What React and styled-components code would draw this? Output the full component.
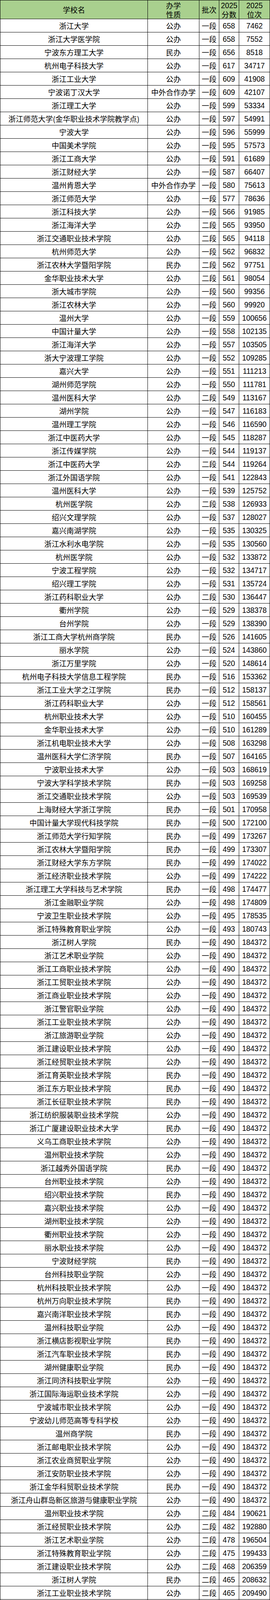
import React from "react";
import styled, { createGlobalStyle } from "styled-components";

const GlobalStyle = createGlobalStyle`
  html {
    -webkit-text-size-adjust: 100%;
    text-size-adjust: 100%;
  }
  html, body { margin: 0; padding: 0; background: #ffffff; }
  body {
    font-family: "Noto Sans CJK SC", "Liberation Sans", sans-serif;
    color: #000;
  }
`;

const RAW = `浙江大学|公办|一段|658|7462
浙江大学医学院|公办|一段|658|7552
宁波东方理工大学|民办|一段|656|8518
杭州电子科技大学|公办|一段|617|34717
浙江工业大学|公办|一段|609|41908
宁波诺丁汉大学|中外合作办学|一段|609|42107
浙江理工大学|公办|一段|599|53334
浙江师范大学(金华职业技术学院教学点)|公办|一段|597|54991
宁波大学|公办|一段|596|55999
中国美术学院|公办|一段|595|57573
浙江工商大学|公办|一段|591|61689
浙江财经大学|公办|一段|587|66407
温州肯恩大学|中外合作办学|一段|580|75613
浙江师范大学|公办|一段|577|78636
浙江科技大学|公办|一段|566|91985
浙江海洋大学|公办|二段|565|93950
浙江交通职业技术学院|公办|二段|565|94118
杭州师范大学|公办|一段|562|96832
浙江农林大学暨阳学院|民办|二段|562|97751
金华职业技术大学|公办|二段|561|98054
浙大城市学院|公办|一段|560|99356
浙江农林大学|公办|一段|560|99920
温州大学|公办|一段|559|100656
中国计量大学|公办|一段|558|102135
浙江海洋大学|公办|一段|557|103505
浙大宁波理工学院|公办|一段|552|109285
嘉兴大学|公办|一段|551|111213
湖州师范学院|公办|一段|550|111781
温州医科大学|公办|二段|549|113167
湖州学院|公办|一段|547|116183
温州理工学院|公办|一段|546|116590
浙江中医药大学|公办|一段|545|118287
浙江传媒学院|公办|一段|544|119137
浙江中医药大学|公办|二段|544|119264
浙江外国语学院|公办|一段|541|122843
温州医科大学|公办|一段|539|125752
杭州医学院|公办|二段|538|126933
绍兴文理学院|公办|一段|537|128027
嘉兴南湖学院|公办|一段|535|130325
浙江水利水电学院|公办|一段|535|130560
杭州医学院|公办|一段|532|133872
宁波工程学院|公办|一段|532|134717
绍兴理工学院|公办|一段|531|135724
浙江药科职业大学|公办|二段|530|136447
衢州学院|公办|一段|529|138378
台州学院|公办|一段|529|138390
浙江工商大学杭州商学院|民办|一段|526|141605
丽水学院|公办|一段|524|143860
浙江万里学院|公办|一段|520|148614
杭州电子科技大学信息工程学院|民办|一段|516|153362
浙江工业大学之江学院|民办|一段|512|158137
浙江药科职业大学|公办|一段|512|158561
杭州职业技术大学|公办|一段|510|160455
金华职业技术大学|公办|一段|510|161289
浙江机电职业技术大学|公办|一段|508|163298
温州医科大学仁济学院|民办|一段|507|164165
宁波职业技术大学|公办|一段|503|168619
宁波大学科学技术学院|民办|一段|503|169258
浙江交通职业技术学院|公办|一段|503|169539
上海财经大学浙江学院|民办|一段|501|170958
中国计量大学现代科技学院|民办|一段|500|172100
浙江师范大学行知学院|民办|一段|499|173267
浙江农林大学暨阳学院|民办|一段|499|173307
浙江财经大学东方学院|民办|一段|499|174022
浙江经济职业技术学院|公办|一段|499|174222
浙江理工大学科技与艺术学院|民办|一段|498|174477
浙江金融职业学院|公办|一段|498|174809
宁波卫生职业技术学院|公办|一段|495|178535
浙江特殊教育职业学院|公办|一段|493|180743
浙江树人学院|民办|一段|490|184372
浙江艺术职业学院|公办|一段|490|184372
浙江工商职业技术学院|公办|一段|490|184372
浙江工贸职业技术学院|公办|一段|490|184372
浙江商业职业技术学院|公办|一段|490|184372
浙江警官职业学院|公办|一段|490|184372
浙江工业职业技术学院|公办|一段|490|184372
浙江旅游职业学院|公办|一段|490|184372
浙江建设职业技术学院|公办|一段|490|184372
浙江经贸职业技术学院|公办|一段|490|184372
浙江育英职业技术学院|民办|一段|490|184372
浙江东方职业技术学院|民办|一段|490|184372
浙江长征职业技术学院|民办|一段|490|184372
浙江纺织服装职业技术学院|公办|一段|490|184372
浙江广厦建设职业技术大学|民办|一段|490|184372
义乌工商职业技术学院|公办|一段|490|184372
温州职业技术学院|公办|一段|490|184372
浙江越秀外国语学院|民办|一段|490|184372
台州职业技术学院|公办|一段|490|184372
绍兴职业技术学院|民办|一段|490|184372
嘉兴职业技术学院|公办|一段|490|184372
湖州职业技术学院|公办|一段|490|184372
衢州职业技术学院|公办|一段|490|184372
丽水职业技术学院|公办|一段|490|184372
宁波财经学院|民办|一段|490|184372
台州科技职业学院|公办|一段|490|184372
杭州科技职业技术学院|公办|一段|490|184372
杭州万向职业技术学院|民办|一段|490|184372
嘉兴南洋职业技术学院|民办|一段|490|184372
温州科技职业学院|公办|一段|490|184372
浙江横店影视职业学院|民办|一段|490|184372
浙江汽车职业技术学院|民办|一段|490|184372
湖州健康职业学院|民办|一段|490|184372
浙江同济科技职业学院|公办|一段|490|184372
浙江国际海运职业技术学院|公办|一段|490|184372
宁波城市职业技术学院|公办|一段|490|184372
宁波幼儿师范高等专科学校|公办|一段|490|184372
温州商学院|民办|一段|490|184372
浙江邮电职业技术学院|公办|一段|490|184372
浙江农业商贸职业学院|公办|一段|490|184372
浙江安防职业技术学院|公办|一段|490|184372
浙江金华科贸职业技术学院|民办|一段|490|184372
浙江舟山群岛新区旅游与健康职业学院|公办|一段|490|184372
温州职业技术学院|公办|二段|484|190621
浙江经贸职业技术学院|公办|二段|482|192880
浙江艺术职业学院|公办|二段|478|196504
浙江特殊教育职业学院|公办|二段|475|199433
浙江建设职业技术学院|公办|二段|468|206359
浙江树人学院|民办|二段|465|208632
浙江工业职业技术学院|公办|二段|465|209490
杭州科技职业技术学院|公办|二段|463|210588
浙江工商职业技术学院|公办|二段|461|213024
浙江旅游职业学院|公办|二段|461|213035
浙江商业职业技术学院|公办|二段|460|213114
浙江工贸职业技术学院|公办|二段|459|213920
浙江警官职业学院|公办|二段|457|216371
浙江邮电职业技术学院|公办|二段|455|217743
湖州职业技术学院|公办|二段|454|218970
宁波财经学院|民办|二段|452|220014
义乌工商职业技术学院|公办|二段|452|220463
宁波城市职业技术学院|公办|二段|451|221091
台州职业技术学院|公办|二段|451|221171
浙江同济科技职业学院|公办|二段|451|221492
衢州职业技术学院|公办|二段|449|222871
丽水职业技术学院|公办|二段|446|225219
浙江农业商贸职业学院|公办|二段|444|226786
浙江安防职业技术学院|公办|二段|443|227322
嘉兴职业技术学院|公办|二段|443|227569
温州科技职业学院|公办|二段|442|228129
浙江国际海运职业技术学院|公办|二段|438|230831
绍兴职业技术学院|民办|二段|434|234125
台州科技职业学院|公办|二段|431|235754
浙江纺织服装职业技术学院|公办|二段|431|235994
杭州万向职业技术学院|民办|二段|427|238399
浙江舟山群岛新区旅游与健康职业学院|公办|二段|413|247441
浙江育英职业技术学院|民办|二段|411|248495
浙江长征职业技术学院|民办|二段|410|248771
湖州健康职业学院|民办|二段|409|249292
浙江广厦建设职业技术大学|民办|二段|407|250783
浙江东方职业技术学院|民办|二段|402|253200
嘉兴南洋职业技术学院|民办|二段|402|253466
浙江汽车职业技术学院|民办|二段|398|255217
浙江横店影视职业学院|民办|二段|387|260712
浙江越秀外国语学院|民办|二段|385|261592
浙江金华科贸职业技术学院|民办|二段|383|262430
宁波幼儿师范高等专科学校|公办|二段|382|262701
温州商学院|民办|二段|379|264112
浙江宇翔职业技术学院|民办|二段|372|266938`;

const ROWS = RAW.split("\n").map((line) => {
  const [name, kind, batch, score, rank] = line.split("|");
  return { name, kind, batch, score, rank };
});

const Table = styled.div`
  width: 692px;
  box-sizing: border-box;
  border-left: 1px solid #000;
  border-top: 1px solid #000;
  background: #fff;
`;

const Row = styled.div`
  display: grid;
  grid-template-columns: 378px 132px 51px 51px 79px;
  grid-template-rows: ${(p) => (p.$head ? 48 : 34)}px;
  height: ${(p) => (p.$head ? 48 : 34)}px;
  background: ${(p) => (p.$head ? "#a9d08e" : "#ffffff")};
`;

const Cell = styled.div`
  box-sizing: border-box;
  height: ${(p) => (p.$head ? 48 : 34)}px;
  min-height: 0;
  border-right: 1px solid #000;
  border-bottom: 1px solid #000;
  display: flex;
  align-items: center;
  justify-content: center;
  text-align: center;
  overflow: hidden;
  white-space: nowrap;
  font-family: "Noto Sans CJK SC", "Liberation Sans", sans-serif;
  font-size: 19px;
  line-height: ${(p) => (p.$head ? "23px" : "33px")};
  color: #000;
`;

const HeadText = styled.span`
  display: block;
  white-space: pre-line;
`;

const Num = styled.span`
  display: inline-block;
  font-family: "Liberation Sans", Arial, sans-serif;
  font-size: 21px;
  transform: scaleX(0.9);
`;

export default function App() {
  return (
    <>
      <GlobalStyle />
      <Table>
        <Row $head>
          <Cell $head>
            <HeadText>学校名</HeadText>
          </Cell>
          <Cell $head>
            <HeadText>{"办学\n性质"}</HeadText>
          </Cell>
          <Cell $head>
            <HeadText>批次</HeadText>
          </Cell>
          <Cell $head>
            <HeadText>
              <Num>2025</Num>
              {"\n分数"}
            </HeadText>
          </Cell>
          <Cell $head>
            <HeadText>
              <Num>2025</Num>
              {"\n位次"}
            </HeadText>
          </Cell>
        </Row>
        {ROWS.map((r, i) => (
          <Row key={i}>
            <Cell>{r.name}</Cell>
            <Cell>{r.kind}</Cell>
            <Cell>{r.batch}</Cell>
            <Cell>
              <Num>{r.score}</Num>
            </Cell>
            <Cell>
              <Num>{r.rank}</Num>
            </Cell>
          </Row>
        ))}
      </Table>
    </>
  );
}
